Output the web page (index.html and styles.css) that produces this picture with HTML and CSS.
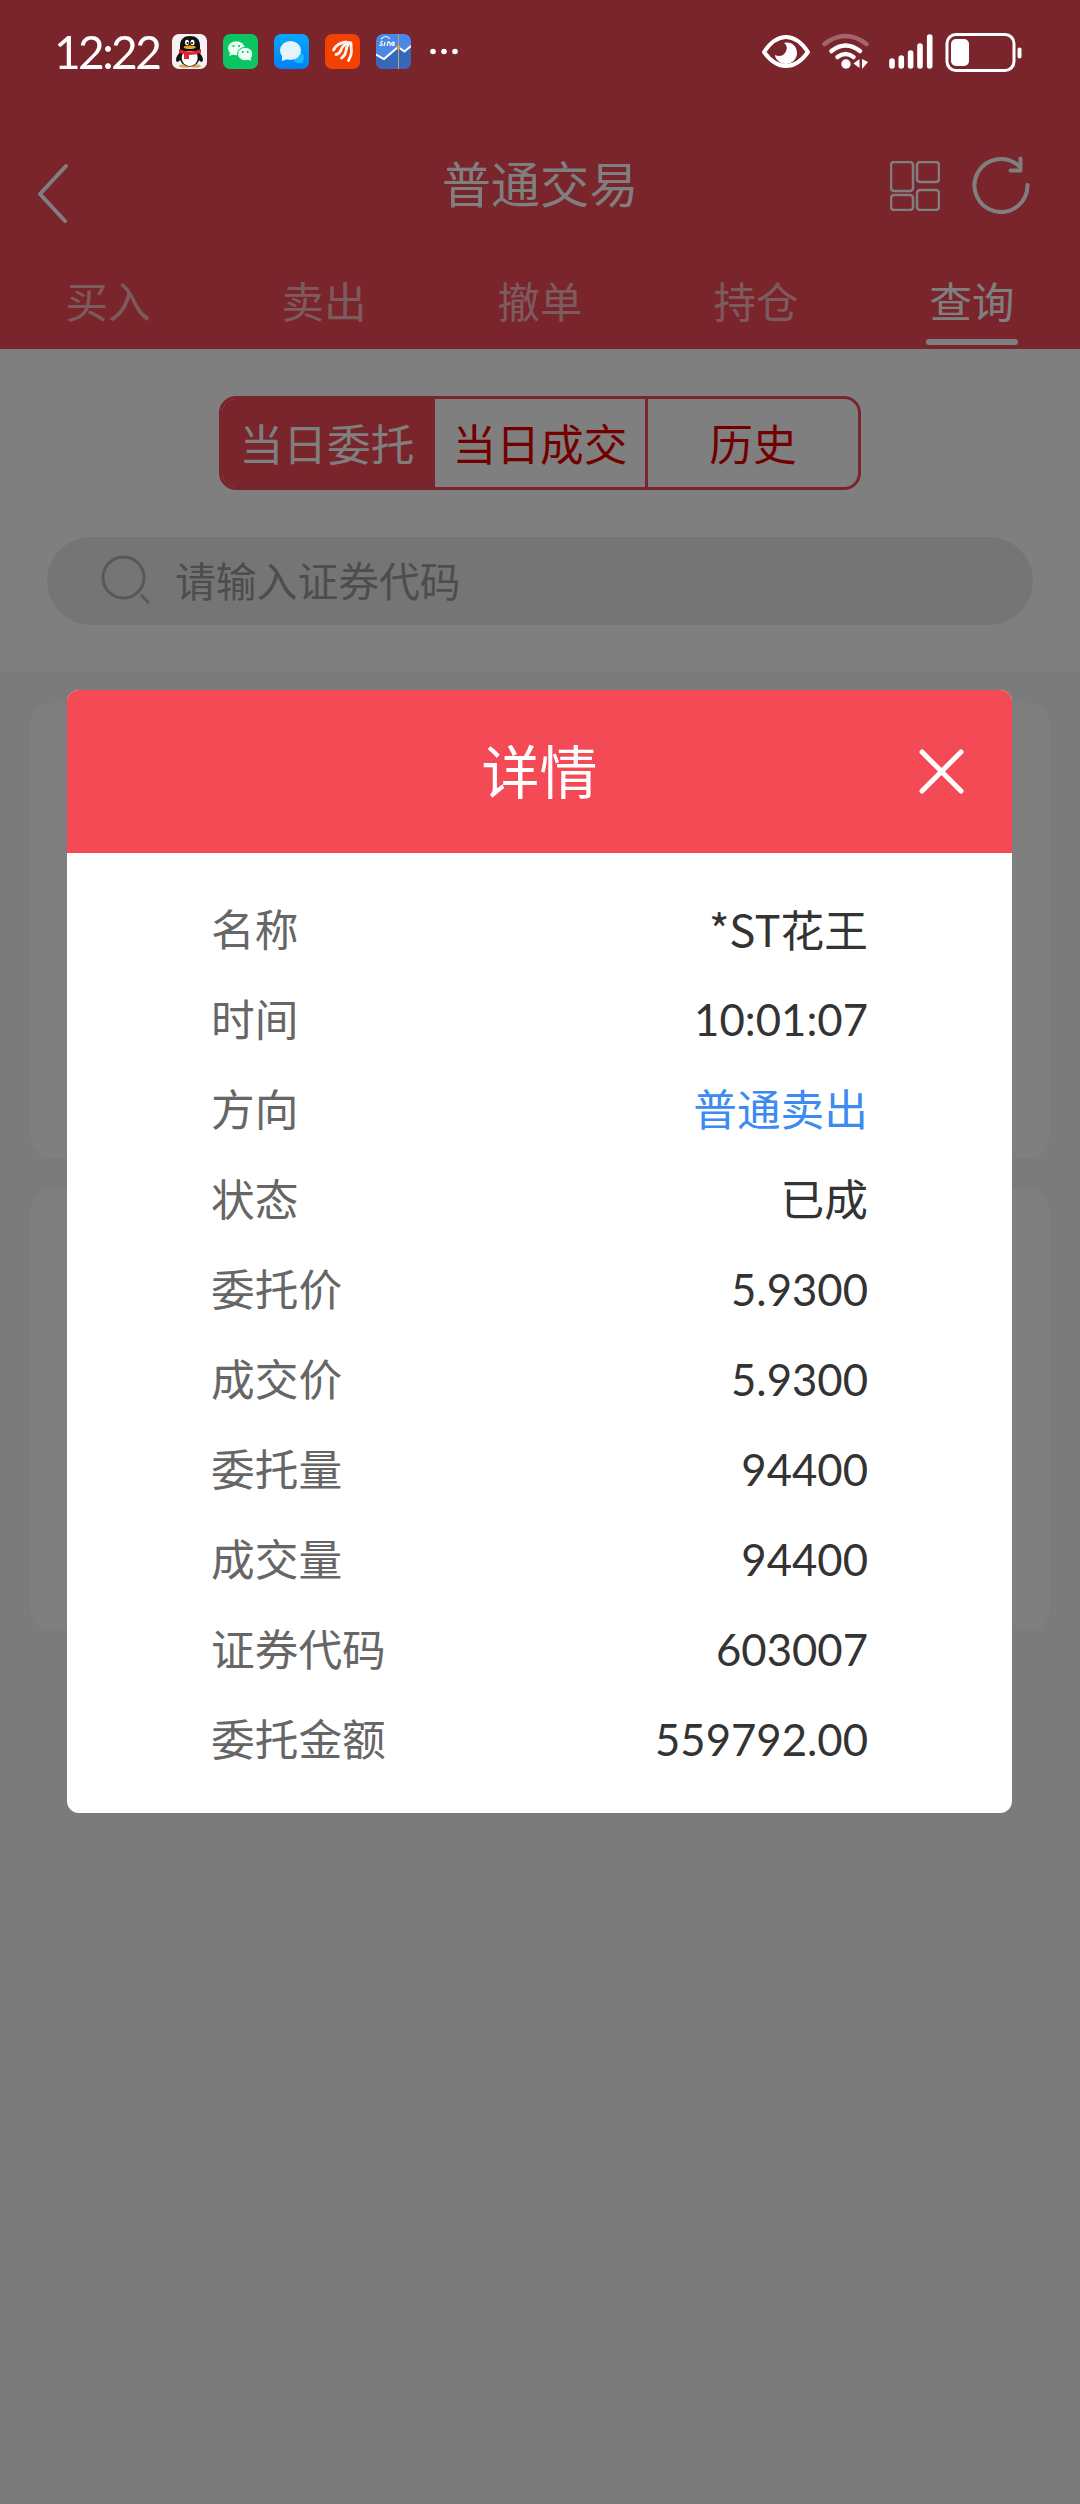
FILE: index.html
```html
<!DOCTYPE html>
<html lang="zh-CN">
  <head>
    <meta charset="utf-8">
    <meta name="viewport" content="width=device-width, initial-scale=1">
    <title>普通交易</title>
    <link rel="stylesheet" href="styles.css">
  </head>
  <body>
    <div class="status-bar">
      <span class="clock">12:22</span>
      <div class="apps">
        <svg viewBox="0 0 35 35">
          <rect width="35" height="35" rx="7" fill="#f4f2f3"/>
          <path d="M9 17C3 23 3 28 6 28L10 24M26 17c6 6 6 11 3 11l-4-4" fill="#111"/>
          <ellipse cx="13" cy="32" rx="6" ry="1.8" fill="#dba94c"/>
          <ellipse cx="23" cy="32" rx="6" ry="1.8" fill="#dba94c"/>
          <ellipse cx="17.7" cy="22" rx="10.5" ry="10.5" fill="#111"/>
          <ellipse cx="17.7" cy="24" rx="8" ry="8" fill="#fff"/>
          <path d="M8 17V12C8 5 12 2 18 2s10 3 10 10v5z" fill="#111"/>
          <ellipse cx="15" cy="8.5" rx="2" ry="2.8" fill="#fff"/>
          <ellipse cx="20.5" cy="8.5" rx="2" ry="2.8" fill="#fff"/>
          <circle cx="15.5" cy="9" r="1"/><circle cx="20" cy="9" r="1"/>
          <ellipse cx="17.7" cy="13.3" rx="6" ry="1.8" fill="#f3a51c"/>
          <path d="M7 15q11 5 22 0v4q-6 2-12 2v4h-5v-5l-5-1z" fill="#e3262b"/>
        </svg>
        <svg viewBox="0 0 35 35">
          <rect width="35" height="35" rx="7" fill="#0ac562"/>
          <path d="M7 17l-.5 5L11 20z" fill="#e8fff2"/>
          <ellipse cx="13.3" cy="14.2" rx="8.3" ry="7" fill="#e8fff2"/>
          <ellipse cx="22.2" cy="20" rx="7.6" ry="6.7" fill="#e8fff2" stroke="#0ac562"/>
          <path d="M24 25l4 2-.5-4z" fill="#e8fff2"/>
          <g fill="#0ac562">
            <circle cx="10.5" cy="12" r="1.1"/><circle cx="16.2" cy="12" r="1.1"/>
            <circle cx="19.8" cy="18" r="1"/><circle cx="24.6" cy="18" r="1"/>
          </g>
        </svg>
        <svg viewBox="0 0 35 35">
          <defs>
            <linearGradient id="sky" x2="0" y2="1">
              <stop stop-color="#06a8fb"/><stop offset="1" stop-color="#0380f5"/>
            </linearGradient>
          </defs>
          <rect width="35" height="35" rx="7" fill="url(#sky)"/>
          <path d="M29 27v2.500l-3-1.500z" fill="#1cb8fb"/>
          <circle cx="24.500" cy="23.500" r="5.500" fill="#1cb8fb"/>
          <path d="M8 21v6l6-2z" fill="#e4f3fe"/>
          <ellipse cx="16.500" cy="16.500" rx="10.500" ry="9.500" fill="#e4f3fe"/>
        </svg>
        <svg viewBox="0 0 35 35">
          <rect width="35" height="35" rx="7" fill="#f24100"/>
          <!-- four feathers fanning out from the top right -->
          <g fill="none" stroke="#fff3ec" stroke-width="2.800" stroke-linecap="round">
            <path d="M21 8Q12 9 8.500 16"/>
            <path d="M23 8.500Q17 12 16 16q-1.500 4-5 4.500"/>
            <path d="M24.500 8.500Q21 13 21 17q-1 5-4.500 7"/>
            <path d="M26 9q0 4 .5 8 0 5-3 9.500"/>
          </g>
        </svg>
        <svg viewBox="0 0 35 35">
          <rect width="35" height="35" rx="7" fill="#4b87e7"/>
          <path d="M0 21l8 5 14-12 6 4 7-6v16a7 7 0 0 1-7 7H7a7 7 0 0 1-7-7z" fill="#3768b8"/>
          <path d="M22.500 0v35" stroke="#b1a58c" stroke-width="1"/>
          <path d="M0 20.500l8 4.500 14-12 6.500 4.500L35 12" fill="none" stroke="#fff" stroke-width="2"/>
          <circle cx="22.500" cy="13.500" r="2" fill="#e89b3d"/>
          <path d="M3 11q4 1 3-1-3-2 1-3M9 8l-1 4M11 12l1-4q3-1 2 4M18 8q-3 0-2 3 2 1 2-3v4M5 5q5-5 9 0" fill="none" stroke="#fff" stroke-width="1.200"/>
        </svg>
        <svg viewBox="0 0 35 35" fill="#fff">
          <circle cx="6" cy="17.500" r="2.800"/><circle cx="17" cy="17.500" r="2.800"/><circle cx="28" cy="17.500" r="2.800"/>
        </svg>
      </div>
      <svg class="system" viewBox="0 0 262 42" fill="none" stroke="#fff" stroke-linecap="round">
        <!-- eye comfort -->
        <path d="M4 21Q14 6 26 6t22 15Q38 35 26 35T4 21z" stroke-width="4" stroke-linejoin="round"/>
        <path d="M24 12c7-2 13 3 13 10 0 6-5 11-11 11s-11-5-11-9c4 2 8 1 10-2 3-4 2-8-1-10z" fill="#fff" stroke="none"/>
        <circle cx="21" cy="18" r="3.500" fill="#7a252b" stroke="none"/>
        <!-- wifi -->
        <path d="M64.500 13q21-16 42 0" stroke-width="4.500" opacity=".3"/>
        <path d="M71.500 20q14-11 28.500 0M77.500 26q8-6 16 0" stroke-width="4.500"/>
        <g fill="#fff" stroke="none">
          <circle cx="86" cy="33" r="4.700"/>
          <path d="M99.500 28v9l-6-4.500zM102 28v10l6-7z"/>
        </g>
        <!-- signal -->
        <path d="M132 30v5M141.300 27v8M150.600 22v13M160 15v20M169.700 6v29" stroke-width="5.600"/>
        <!-- battery -->
        <rect x="187" y="3.500" width="67" height="36" rx="9" stroke-width="3"/>
        <rect x="191" y="8" width="18" height="27" rx="5" fill="#fff" stroke="none"/>
        <path d="M259.500 18.500v7" stroke-width="4"/>
      </svg>
    </div>

    <header class="header">
      <div class="title-bar">
        <svg class="back" viewBox="0 0 30 60">
          <path d="M28 3L2 31l25 27"/>
        </svg>
        <h1>普通交易</h1>
        <div class="actions">
          <svg class="layout" viewBox="0 0 50 50">
            <rect x="1" y="1" width="22" height="29" rx="3"/>
            <rect x="27" y="1" width="22" height="20" rx="3"/>
            <rect x="1" y="34" width="22" height="15" rx="3"/>
            <rect x="27" y="29" width="22" height="20" rx="3"/>
          </svg>
          <svg class="refresh" viewBox="0 0 58 58">
            <path d="M55.500 29A26.500 26.500 0 1 1 47.500 10.500M48.500 2.500v12H38.500"/>
          </svg>
        </div>
      </div>
      <nav class="tabs">
        <a>买入</a>
        <a>卖出</a>
        <a>撤单</a>
        <a>持仓</a>
        <a class="active">查询</a>
      </nav>
    </header>

    <section class="filters">
      <div class="segments">
        <span class="active">当日委托</span>
        <span>当日成交</span>
        <span>历史</span>
      </div>
      <div class="search">
        <svg viewBox="0 0 50 50">
          <circle cx="22.500" cy="22.500" r="20.500"/>
          <path d="M40 40l8 8"/>
        </svg>
        <span>请输入证券代码</span>
      </div>
    </section>

    <main class="orders">
      <div class="card first"></div>
      <div class="card"></div>
    </main>

    <div class="mask">
      <div class="dialog">
        <div class="dialog-header">
          <h2>详情</h2>
          <svg class="close" viewBox="0 0 45 45">
            <path d="M3 3l39 39M42 3L3 42"/>
          </svg>
        </div>
        <dl class="details">
          <div><dt>名称</dt><dd class="name">*ST花王</dd></div>
          <div><dt>时间</dt><dd>10:01:07</dd></div>
          <div><dt>方向</dt><dd class="sell">普通卖出</dd></div>
          <div><dt>状态</dt><dd>已成</dd></div>
          <div><dt>委托价</dt><dd>5.9300</dd></div>
          <div><dt>成交价</dt><dd>5.9300</dd></div>
          <div><dt>委托量</dt><dd>94400</dd></div>
          <div><dt>成交量</dt><dd>94400</dd></div>
          <div><dt>证券代码</dt><dd>603007</dd></div>
          <div><dt>委托金额</dt><dd>559792.00</dd></div>
        </dl>
      </div>
    </div>
  </body>
</html>
```

FILE: styles.css
```css
* {
  box-sizing: border-box;
}

body {
  margin: 0;
  min-height: 2504px;
  background: #f7f7f7;
  font-family: Lato, "Noto Sans CJK SC", sans-serif;
  font-size: 43.7px;
}

h1,
h2,
dl,
dt,
dd {
  margin: 0;
  font-weight: normal;
}

/* stays above the mask, so the system icons are not dimmed */
.status-bar {
  position: fixed;
  top: 0;
  left: 0;
  z-index: 2;
  display: flex;
  align-items: center;
  width: 100%;
  height: 103px;
  padding: 0 58px 0 54px;
  color: #fff;
}

.clock {
  width: 118px;
  font-size: 46px;
  line-height: 50px;
  letter-spacing: -2.6px;
}

.apps {
  display: flex;
  gap: 16px;
}

.apps svg {
  width: 35px;
  height: 35px;
}

.system {
  width: 262px;
  height: 42px;
  margin-left: auto;
}

.header {
  height: 349px;
  padding-top: 103px;
  background: #f44a56;
  color: #fff;
}

.header svg {
  display: block;
  fill: none;
  stroke: #fff;
  stroke-width: 4;
  stroke-linecap: round;
  stroke-linejoin: round;
}

.title-bar {
  display: grid;
  grid-template-columns: 1fr auto 1fr;
  align-items: center;
  height: 164px;
  padding: 0 50px 0 38px;
}

.title-bar h1 {
  margin: 0 -6px 3px 6px;
  font-size: 49.2px;
  line-height: 60px;
}

.header .back {
  width: 30px;
  height: 60px;
  margin-top: 15px;
}

.actions {
  display: flex;
  align-items: center;
  justify-content: flex-end;
  gap: 32px;
}

.header .layout {
  width: 50px;
  height: 50px;
  margin-top: 2px;
  stroke-width: 2.5;
}

.header .refresh {
  width: 58px;
  height: 58px;
}

.tabs {
  display: flex;
  height: 82px;
}

.tabs a {
  flex: 1;
  display: flex;
  flex-direction: column;
  align-items: center;
  font-size: 42.5px;
  line-height: 70px;
  color: rgba(255, 255, 255, 0.6);
}

.tabs .active {
  color: #fff;
}

.tabs .active::after {
  content: "";
  width: 92px;
  height: 6px;
  margin-top: 2px;
  border-radius: 3px;
  background: #fff;
}

.filters {
  height: 323px;
  padding: 47px 47px 0;
  background: #fff;
}

.segments {
  display: flex;
  width: 642px;
  height: 94px;
  margin: 0 auto;
  border: 3px solid #f44a56;
  border-radius: 17px;
  overflow: hidden;
  color: #e60000;
}

.segments span {
  flex: 1;
  line-height: 91px;
  text-align: center;
}

.segments span + span {
  border-left: 3px solid #f44a56;
}

.segments .active {
  background: #f44a56;
  color: #fff;
}

.search {
  display: flex;
  align-items: center;
  gap: 24px;
  height: 88px;
  margin-top: 47px;
  padding: 0 0 3px 54px;
  border-radius: 44px;
  background: #ebebeb;
  font-size: 40.8px;
  color: #9a9a9a;
}

.search svg {
  width: 50px;
  height: 50px;
  fill: none;
  stroke: #b0b0b0;
  stroke-width: 3;
}

.orders {
  padding: 31px 31px 0;
}

.card {
  height: 442px;
  margin-bottom: 31px;
  border-radius: 20px;
  background: #fff;
}

.card.first {
  height: 455px;
}

.mask {
  position: fixed;
  inset: 0;
  display: flex;
  align-items: center;
  justify-content: center;
  padding: 0 1px 1px 0;
  background: rgba(0, 0, 0, 0.5);
}

.dialog {
  width: 945px;
  border-radius: 12px;
  overflow: hidden;
  background: #fff;
}

.dialog-header {
  display: grid;
  grid-template-columns: 1fr auto 1fr;
  align-items: center;
  height: 163px;
  padding: 0 48px;
  background: #f44a56;
  color: #fff;
}

.dialog-header h2 {
  grid-column: 2;
  font-size: 58px;
  line-height: 80px;
}

.close {
  justify-self: end;
  width: 45px;
  height: 45px;
  stroke: #fff;
  stroke-width: 5;
  stroke-linecap: round;
}

.details {
  padding: 31px 144px 29px;
}

.details div {
  display: flex;
  justify-content: space-between;
  line-height: 90px;
}

.details dt {
  color: #666;
}

.details dd {
  color: #333;
}

.details .name {
  font-family: "Noto Sans CJK SC", sans-serif;
  line-height: 88px;
}

.details .sell {
  color: #3d8af0;
}
```
